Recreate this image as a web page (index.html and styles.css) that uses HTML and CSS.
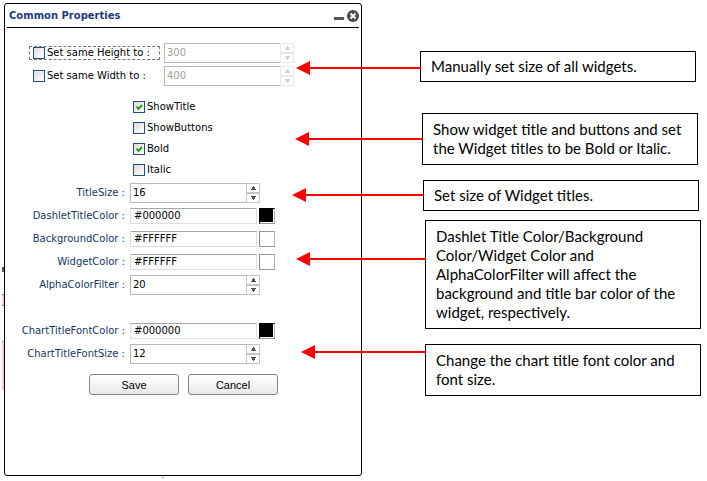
FILE: index.html
```html
<!DOCTYPE html>
<html lang="en">
<head>
<meta charset="utf-8">
<title>Common Properties</title>
<link rel="stylesheet" href="styles.css">
</head>
<body>
<svg class="symbols" width="0" height="0" aria-hidden="true">
  <symbol id="up" viewBox="0 0 5 4"><path d="M2 0h1v1h1v2h1v1H0V3h1V1h1z"/></symbol>
  <symbol id="down" viewBox="0 0 5 4"><path d="M0 0h5v1H4v2H3v1H2V3H1V1H0z"/></symbol>
</svg>
<div class="behind" aria-hidden="true"><i class="mark"></i><i class="chip"></i><i class="bar"></i><i class="tick"></i></div>
<main class="page">
  <form class="dialog" onsubmit="return false">
    <header class="titlebar">
      <h1>Common Properties</h1>
      <button type="button" class="tool" aria-label="Minimize"><svg width="10" height="12" viewBox="0 0 10 12"><path d="M0 7h10v3H0z" fill="#555"/></svg></button>
      <button type="button" class="tool" aria-label="Close"><svg width="12" height="12" viewBox="0 0 12 12"><circle cx="6" cy="6" r="6" fill="#4c4c4c"/><path d="M3.5 3.5l5 5m0-5l-5 5" stroke="#fff" stroke-width="2"/></svg></button>
    </header>

    <div class="sizes">
      <div class="size-row">
        <label class="check focused"><input type="checkbox">Set same Height to :</label>
        <div class="spin off"><input type="text" value="300" aria-label="Height" disabled><span class="steps"><button type="button" aria-label="Increase height" disabled><svg><use href="#up"/></svg></button><button type="button" aria-label="Decrease height" disabled><svg><use href="#down"/></svg></button></span></div>
      </div>
      <div class="size-row">
        <label class="check"><input type="checkbox">Set same Width to :</label>
        <div class="spin off"><input type="text" value="400" aria-label="Width" disabled><span class="steps"><button type="button" aria-label="Increase width" disabled><svg><use href="#up"/></svg></button><button type="button" aria-label="Decrease width" disabled><svg><use href="#down"/></svg></button></span></div>
      </div>
    </div>

    <div class="options">
      <label class="check"><input type="checkbox" checked>ShowTitle</label>
      <label class="check"><input type="checkbox">ShowButtons</label>
      <label class="check"><input type="checkbox" checked>Bold</label>
      <label class="check"><input type="checkbox">Italic</label>
    </div>

    <div class="fields">
      <div class="field"><label for="ts">TitleSize :</label>
        <div class="spin"><input type="text" id="ts" value="16"><span class="steps"><button type="button" aria-label="Increase title size"><svg><use href="#up"/></svg></button><button type="button" aria-label="Decrease title size"><svg><use href="#down"/></svg></button></span></div></div>
      <div class="field"><label for="dc">DashletTitleColor :</label>
        <div class="color"><input type="text" id="dc" value="#000000"><button type="button" class="swatch black" aria-label="Pick dashlet title color"></button></div></div>
      <div class="field"><label for="bc">BackgroundColor :</label>
        <div class="color"><input type="text" id="bc" value="#FFFFFF"><button type="button" class="swatch" aria-label="Pick background color"></button></div></div>
      <div class="field"><label for="wc">WidgetColor :</label>
        <div class="color"><input type="text" id="wc" value="#FFFFFF"><button type="button" class="swatch" aria-label="Pick widget color"></button></div></div>
      <div class="field"><label for="af">AlphaColorFilter :</label>
        <div class="spin"><input type="text" id="af" value="20"><span class="steps"><button type="button" aria-label="Increase alpha"><svg><use href="#up"/></svg></button><button type="button" aria-label="Decrease alpha"><svg><use href="#down"/></svg></button></span></div></div>
    </div>

    <div class="fields chart">
      <div class="field"><label for="cc">ChartTitleFontColor :</label>
        <div class="color"><input type="text" id="cc" value="#000000"><button type="button" class="swatch black" aria-label="Pick chart title color"></button></div></div>
      <div class="field"><label for="cs">ChartTitleFontSize :</label>
        <div class="spin"><input type="text" id="cs" value="12"><span class="steps"><button type="button" aria-label="Increase chart title size"><svg><use href="#up"/></svg></button><button type="button" aria-label="Decrease chart title size"><svg><use href="#down"/></svg></button></span></div></div>
    </div>

    <div class="actions">
      <button type="submit">Save</button>
      <button type="button">Cancel</button>
    </div>
  </form>

  <aside class="notes">
    <p class="note n1">Manually set size of all widgets.<i class="arrow"></i></p>
    <p class="note n2">Show widget title and buttons and set the Widget titles to be Bold or Italic.<i class="arrow"></i></p>
    <p class="note n3">Set size of Widget titles.<i class="arrow"></i></p>
    <p class="note n4">Dashlet Title Color/Background Color/Widget Color and AlphaColorFilter will affect the background and title bar color of the widget, respectively.<i class="arrow"></i></p>
    <p class="note n5">Change the chart title font color and font size.<i class="arrow"></i></p>
  </aside>
</main>
</body>
</html>
```
FILE: styles.css
```css
* { box-sizing: border-box; }

body {
  margin: 0;
  background: #fff;
  color: #000;
  font: 10px/14px "DejaVu Sans", Verdana, sans-serif;
}

button, input { margin: 0; padding: 0; font: inherit; color: inherit; }
.symbols { position: absolute; }

/* Edges of the page that show from under the dialog */
.behind i { position: absolute; left: 2px; width: 3px; }
.behind .mark { top: 267px; height: 5px; background: #555; }
.behind .chip { top: 294px; height: 12px; background: #f6d5d2; border: solid #d9604c; border-width: 1px 0; }
.behind .bar { top: 341px; height: 49px; background: #f6d0cd; border-top: 1px solid #e08a7c; }
.behind .tick { top: 476px; left: 161px; height: 3px; background: #ddd; }

.page {
  position: relative;
  display: grid;
  grid-template-columns: 358fr 339fr;
  padding: 3px 6px 5px 4px;
}

.dialog {
  border: 1px solid #000;
  border-radius: 3px;
  background: #fff;
  padding-bottom: 80px;
}

.titlebar {
  display: flex;
  align-items: center;
  gap: 3px;
  height: 24px;
  margin: 0 2px;
  padding: 1px 0 0 2px;
  border-bottom: 1px solid #000;
}
.titlebar h1 {
  flex: 1;
  margin: 0;
  font-size: 10px;
  color: #1f3c7d;
}
.tool { display: flex; border: 0; background: none; }

.sizes { padding: 13px 0 0 24px; }
.size-row { display: flex; align-items: center; gap: 4px; height: 23px; }
.size-row .check { width: 131px; }

.check { display: flex; align-items: center; gap: 2px; padding-left: 3px; white-space: nowrap; border: 1px solid transparent; height: 14px; }
.check.focused { border: 1px dashed #777; }
.check input {
  appearance: none;
  flex: none;
  width: 12px;
  height: 12px;
  border: 1px solid #1f5080;
  background: linear-gradient(135deg, #ddd, #fff);
}
.check input:checked {
  background:
    url("data:image/svg+xml,%3Csvg xmlns='http://www.w3.org/2000/svg' viewBox='0 0 10 10'%3E%3Cpath d='M2.5 4.5l2 2.5 3.5-4' fill='none' stroke='%2321a121' stroke-width='2'/%3E%3C/svg%3E"),
    linear-gradient(135deg, #ddd, #fff);
}

.options { display: grid; grid-auto-rows: 21px; align-items: center; padding: 9px 0 1px 124px; }

.field { display: grid; grid-template-columns: 120px 1fr; gap: 5px; align-items: center; height: 23px; }
.field label { text-align: right; color: #17375e; white-space: nowrap; }
.chart { padding-top: 23px; }

.spin { display: flex; width: 130px; height: 20px; }
.spin input {
  flex: 1;
  min-width: 0;
  padding-left: 2px;
  border: 1px solid #b8b8b8;
  border-right: 0;
  background: #fff;
}
.steps { display: flex; flex-direction: column; width: 14px; }
.steps button {
  flex: 1;
  display: flex;
  align-items: center;
  justify-content: center;
  border: 1px solid #c4c4c4;
  background: #fff;
  color: #505050;
}
.steps svg { width: 5px; height: 4px; fill: currentColor; }
.off input { color: #a5a09a; }
.off .steps button { border-color: #e8e8e8; color: #d0d0d0; }

.color { display: flex; align-items: center; gap: 2px; }
.color input {
  width: 127px;
  height: 16px;
  padding-left: 3px;
  border: 1px solid #dcdce4;
  border-top-color: #a5a5ad;
  background: #fff;
}
.swatch {
  width: 16px;
  height: 16px;
  border: 1px solid;
  border-color: #999 #b4b4b4 #999 #888;
  background: #fff;
}
.black { background: #000; border-color: #000 #b4b4b4 #999 #000; box-shadow: inset -1px -1px #fff; }

.actions { display: flex; gap: 9px; padding: 9px 0 0 84px; }
.actions button {
  width: 90px;
  height: 21px;
  border: 1px solid #858585;
  border-radius: 3px;
  background: linear-gradient(#fff, #e9e9e9);
  font: 11px/14px "Liberation Sans", Arial, sans-serif;
}

.notes { padding: 48px 0 0 58px; font: 15px/19px Lato, "Open Sans", sans-serif; }
.note {
  position: relative;
  margin: 0 4px 15px 0;
  padding: 6px 10px;
  border: 1px solid #000;
  background: #fff;
}
.n1, .n3 { padding: 5px 10px; }
.n1 { margin: 0 5px 31px 0; }
.n2 { margin: 0 3px 15px 2px; }
.n3 { margin: 0 2px 9px 3px; }
.n4, .n5 { margin: 0 0 15px 5px; }

/* Callout arrows reach over the dialog */
.arrow {
  position: absolute;
  right: 100%;
  width: 128px;
  height: 14px;
  background: linear-gradient(#f00, #f00) right center / calc(100% - 12px) 2px no-repeat;
}
.arrow::before {
  content: "";
  position: absolute;
  left: 0;
  top: 0;
  border: 7px solid transparent;
  border-left: 0;
  border-right: 14px solid #f00;
}
.n1 .arrow { top: 9px; width: 125px; }
.n2 .arrow { top: 18px; }
.n3 .arrow { top: 7px; width: 132px; }
.n4 .arrow { top: 31px; width: 130px; }
.n5 .arrow { top: 0; width: 125px; }
```
